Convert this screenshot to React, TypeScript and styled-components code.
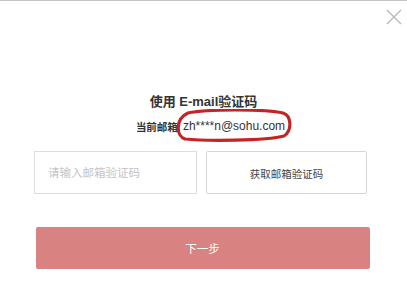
import React from 'react';
import styled, { createGlobalStyle } from 'styled-components';

const GlobalStyle = createGlobalStyle`
  html, body {
    margin: 0;
    padding: 0;
    background: #fff;
  }
  body {
    font-family: "Liberation Sans", "Noto Sans CJK SC", sans-serif;
  }
`;

const Dialog = styled.div`
  position: relative;
  box-sizing: border-box;
  width: 407px;
  height: 285px;
  border-top: 1px solid #c4c4c4;
  background: #fff;
  display: flex;
  flex-direction: column;
  align-items: center;
  padding-top: 93px;
`;

const CloseButton = styled.button`
  position: absolute;
  top: 8px;
  right: 5px;
  width: 16px;
  height: 16px;
  padding: 0;
  border: 0;
  background: none;
  cursor: pointer;
  color: #b8b8b8;
`;

const Title = styled.h3`
  margin: 0;
  font-size: 13px;
  line-height: 16px;
  font-weight: bold;
  color: #333;
`;

const Current = styled.div`
  margin-top: 7px;
  display: flex;
  align-items: center;
  padding-left: 14px;
`;

const Label = styled.span`
  font-size: 10.5px;
  font-weight: bold;
  color: #333;
  margin-right: 5px;
`;

const Email = styled.span`
  position: relative;
  font-size: 12px;
  line-height: 18px;
  color: #333;
`;

const Circle = styled.svg`
  position: absolute;
  left: -9px;
  top: -8px;
  width: 118px;
  height: 33px;
  pointer-events: none;
`;

const Row = styled.div`
  margin-top: 16px;
  margin-right: 6px;
  display: grid;
  grid-template-columns: 163px 161px;
  gap: 9px;
  width: 333px;
`;

const CodeInput = styled.input`
  box-sizing: border-box;
  height: 43px;
  border: 1px solid #dedede;
  padding: 0 13px;
  font-size: 11.5px;
  color: #333;
  font-family: inherit;
  outline: none;
  &::placeholder {
    color: #c4c4c4;
  }
`;

const SendButton = styled.button`
  box-sizing: border-box;
  height: 43px;
  border: 1px solid #d6d6d6;
  border-radius: 2px;
  background: #fff;
  font-size: 10.5px;
  color: #444;
  font-family: inherit;
  padding-top: 3px;
  cursor: pointer;
`;

const NextButton = styled.button`
  margin-top: 33px;
  margin-right: 2px;
  width: 334px;
  height: 42px;
  border: 0;
  border-radius: 2px;
  background: #d88282;
  color: #fff;
  font-size: 11.5px;
  font-family: inherit;
  cursor: pointer;
`;

const App = () => (
  <>
    <GlobalStyle />
    <Dialog>
      <CloseButton aria-label="关闭">
        <svg width="16" height="16" viewBox="0 0 16 16">
          <path d="M1 1 L15 15 M15 1 L1 15" stroke="currentColor" strokeWidth="1.4" fill="none" />
        </svg>
      </CloseButton>
      <Title>使用 E-mail验证码</Title>
      <Current>
        <Label>当前邮箱</Label>
        <Email>
          zh****n@sohu.com
          <Circle viewBox="0 0 118 33">
            <path
              d="M14 4 C32 0 92 0 109 4 C118 7 118 22 110 27 C92 32 30 32 11 30 C2 27 1 10 14 4 Z"
              stroke="#c62424"
              strokeWidth="3.2"
              fill="none"
            />
          </Circle>
        </Email>
      </Current>
      <Row>
        <CodeInput placeholder="请输入邮箱验证码" />
        <SendButton>获取邮箱验证码</SendButton>
      </Row>
      <NextButton>下一步</NextButton>
    </Dialog>
  </>
);

export default App;
